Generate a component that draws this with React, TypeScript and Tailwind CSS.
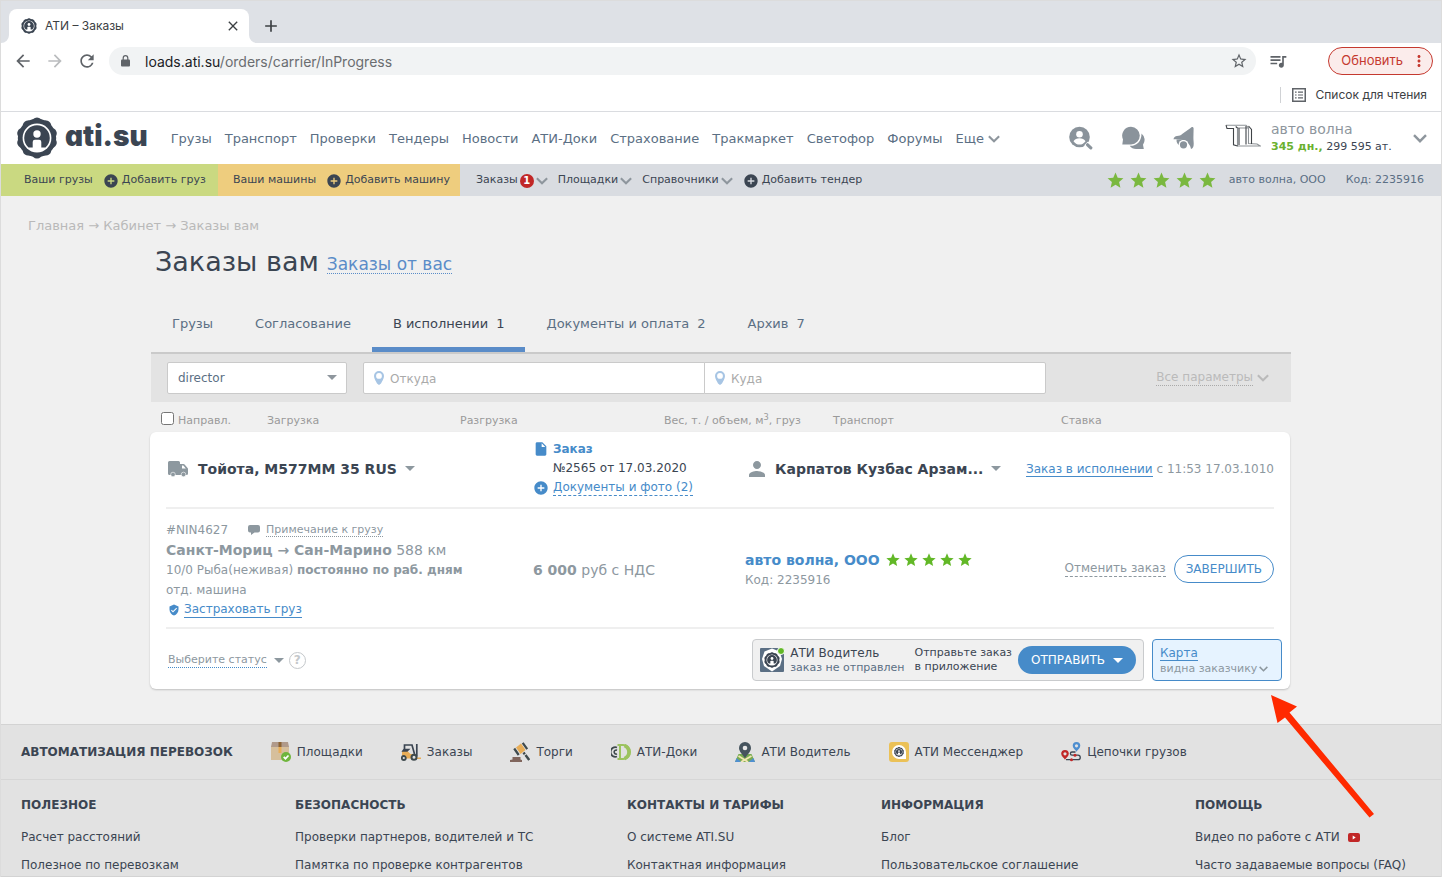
import React from 'react';
import {
  MdAddCircle,
  MdArrowBack,
  MdArrowForward,
  MdClose,
  MdAdd,
  MdInsertDriveFile,
  MdMoreVert,
  MdPerson,
  MdQueueMusic,
  MdRefresh,
  MdStar,
  MdStarBorder,
  MdVerifiedUser,
} from 'react-icons/md';

const mainNav = ['Грузы', 'Транспорт', 'Проверки', 'Тендеры', 'Новости', 'АТИ-Доки', 'Страхование', 'Тракмаркет', 'Светофор', 'Форумы'];

const tabs = [
  { name: 'Грузы' },
  { name: 'Согласование' },
  { name: 'В исполнении', count: 1, active: true },
  { name: 'Документы и оплата', count: 2 },
  { name: 'Архив', count: 7 },
];

const footerColumns = [
  { title: 'ПОЛЕЗНОЕ', links: ['Расчет расстояний', 'Полезное по перевозкам'] },
  { title: 'БЕЗОПАСНОСТЬ', links: ['Проверки партнеров, водителей и ТС', 'Памятка по проверке контрагентов'] },
  { title: 'КОНТАКТЫ И ТАРИФЫ', links: ['О системе ATI.SU', 'Контактная информация'] },
  { title: 'ИНФОРМАЦИЯ', links: ['Блог', 'Пользовательское соглашение'] },
  { title: 'ПОМОЩЬ', links: ['Видео по работе с АТИ', 'Часто задаваемые вопросы (FAQ)'], video: true },
];

function GearLogo({ className }: { className?: string }) {
  return (
    <svg viewBox="0 0 42 42" className={className} fill="currentColor" aria-hidden="true">
      <circle cx="21" cy="21" r="19.2" />
      {[0, 36, 72, 108, 144, 180, 216, 252, 288, 324].map((a) => (
        <circle key={a} cx="21" cy="5.8" r="5.3" transform={`rotate(${a} 21 21)`} />
      ))}
      <circle cx="21" cy="21" r="14.4" fill="white" />
      <path d="M21 8.200a12.800 12.800 0 0 1 12.800 12.800c0 4-1.600 7-4.300 9.500h-17c-2.700-2.500-4.300-5.500-4.300-9.500A12.800 12.800 0 0 1 21 8.200z" />
      <circle cx="21" cy="17" r="3.700" fill="white" />
      <path d="M16.700 31.500v-6.500a2.200 2.200 0 0 1 2.200-2.200h4.200a2.200 2.200 0 0 1 2.200 2.200v6.500z" fill="white" />
    </svg>
  );
}

function Caret({ className = '' }: { className?: string }) {
  return (
    <svg viewBox="0 0 10 5" className={`w-[10px] h-[5px] shrink-0 ${className}`} fill="currentColor" aria-hidden="true">
      <path d="M0 0h10L5 5z" />
    </svg>
  );
}

function Chevron({ className = '' }: { className?: string }) {
  return (
    <svg viewBox="0 0 14 9" className={`shrink-0 ${className}`} fill="none" stroke="currentColor" strokeWidth="2.4" aria-hidden="true">
      <path d="M1 1.200l6 6 6-6" />
    </svg>
  );
}

function PinIcon() {
  return (
    <svg viewBox="0 0 10 14" className="w-2.5 h-3.5 shrink-0" aria-hidden="true">
      <path fillRule="evenodd" d="M5 0a5 5 0 0 1 5 5c0 3-2 5-3 7.500L5 14l-2-1.500C2 10 0 8 0 5a5 5 0 0 1 5-5zm0 2a2.900 2.900 0 1 0 0 5.800A2.900 2.900 0 0 0 5 2z" fill="#a7c5e4" />
    </svg>
  );
}

function TruckIcon() {
  return (
    <svg viewBox="0 0 20 16" className="w-5 h-4 shrink-0" aria-hidden="true">
      <path d="M1.500 0h9A1.500 1.500 0 0 1 12 1.500V3h3.500c.5 0 1 .3 1.300.7L19.600 7c.3.400.4.8.4 1.200v4.300c0 .8-.5 1.500-1.500 1.500h-17C.5 14 0 13.300 0 12.500v-11A1.500 1.500 0 0 1 1.500 0z" fill="#8d989f" />
      <path d="M14 4.500h1.300l2.500 3H14z" fill="white" />
      <circle cx="5" cy="13.500" r="2.300" fill="#8d989f" stroke="white" strokeWidth=".6" />
      <circle cx="15.500" cy="13.500" r="2.300" fill="#8d989f" stroke="white" strokeWidth=".6" />
    </svg>
  );
}

function BrowserBar() {
  return (
    <div className="text-[#3c4043] [font-family:Inter,sans-serif]">
      <div className="flex h-[43px] items-end bg-[#dee1e6] border-t border-[#dcdcdc] pl-2">
        <div className="relative flex h-[34px] w-60 items-center rounded-t-lg bg-white pl-3 pr-2">
          <svg viewBox="0 0 8 8" className="absolute -left-2 bottom-0 w-2 h-2 fill-white" aria-hidden="true"><path d="M8 0v8H0a8 8 0 0 0 8-8z" /></svg>
          <svg viewBox="0 0 8 8" className="absolute -right-2 bottom-0 w-2 h-2 fill-white" aria-hidden="true"><path d="M0 0v8h8a8 8 0 0 1-8-8z" /></svg>
          <GearLogo className="w-4 h-4 text-[#3b4552]" />
          <span className="ml-2 flex-1 text-xs">АТИ – Заказы</span>
          <button type="button" aria-label="Закрыть вкладку"><MdClose className="w-4 h-4" /></button>
        </div>
        <button type="button" aria-label="Новая вкладка" className="ml-3 mb-[7px]"><MdAdd className="w-5 h-5" /></button>
      </div>

      <div className="flex h-9 items-center bg-white pl-3 pr-2">
        <button type="button" aria-label="Назад"><MdArrowBack className="w-5 h-5 text-[#5f6368]" /></button>
        <button type="button" aria-label="Вперёд" className="ml-3"><MdArrowForward className="w-5 h-5 text-[#babcbe]" /></button>
        <button type="button" aria-label="Обновить страницу" className="ml-3"><MdRefresh className="w-5 h-5 text-[#5f6368]" /></button>
        <div className="ml-3 flex h-7 flex-1 items-center rounded-full bg-[#f1f3f4] pl-3 pr-2">
          <svg viewBox="0 0 9 12" className="w-[9px] h-3" aria-hidden="true">
            <path d="M2.200 5V3a2.300 2.300 0 0 1 4.600 0v2" fill="none" stroke="#5f6368" strokeWidth="1.200" />
            <rect y="4.500" width="9" height="7" rx="1" fill="#5f6368" />
          </svg>
          <span className="ml-[15px] flex-1 pt-px text-sm text-[#6a6d70]"><span className="text-[#202124]">loads.ati.su</span>/orders/carrier/InProgress</span>
          <button type="button" aria-label="Добавить в закладки"><MdStarBorder className="w-[18px] h-[18px] text-[#5f6368]" /></button>
        </div>
        <MdQueueMusic className="ml-3 w-5 h-5 text-[#5f6368]" />
        <button type="button" className="ml-10 flex h-7 items-center rounded-full border border-[#c5392f] bg-[#fbeceb] pl-3 pr-1 text-[13px] text-[#c5392f]">
          Обновить
          <MdMoreVert className="ml-[7px] w-[18px] h-[18px]" />
        </button>
      </div>

      <div className="flex h-[33px] items-center justify-end border-b border-[#dadce0] bg-white pr-3.5">
        <span className="h-4 w-px bg-[#d0d2d5]"></span>
        <svg viewBox="0 0 14 14" className="ml-[11px] w-3.5 h-3.5" fill="none" stroke="#5f6368" aria-hidden="true">
          <path d="M.75.75h12.500v12.500H.75z" strokeWidth="1.500" />
          <path d="M3 4.200h1.600M3 7h1.600M3 9.800h1.600M6 4.200h5M6 7h5M6 9.800h5" strokeWidth="1.200" />
        </svg>
        <span className="ml-2.5 text-xs">Список для чтения</span>
      </div>
    </div>
  );
}

function Header() {
  return (
    <header className="flex h-[52px] items-center bg-white pl-[15px] pr-3.5">
      <a href="#" className="flex items-center text-[#3b4552]">
        <GearLogo className="w-[42px] h-[42px]" />
        <span className="ml-[7px] mb-1 text-[28px] leading-8 font-black [font-family:Inter,sans-serif] [font-feature-settings:'cv11']">ati.su</span>
      </a>
      <nav className="ml-[23px] flex items-center gap-[13px] pt-px text-[13px] text-[#5b6f84]">
        {mainNav.map((item) => (
          <a key={item} href="#">{item}</a>
        ))}
        <button type="button" className="flex items-center gap-1">
          Еще <Chevron className="w-3 h-2 text-[#8e969d]" />
        </button>
      </nav>
      <div className="ml-auto flex items-center text-[#8a939b]">
        <a href="#" aria-label="Поиск фирм">
          <svg viewBox="0 0 24 24" className="w-6 h-6" fill="currentColor" aria-hidden="true">
            <circle cx="10.500" cy="11" r="10.300" />
            <circle cx="10.500" cy="8.200" r="3.300" fill="white" />
            <path d="M4.500 15.300c1-2 3.500-3 6-3s5 1 6 3a7.200 7.200 0 0 1-12 0z" fill="white" />
            <path d="M17 17.500l6 6" stroke="white" strokeWidth="5" />
            <path d="M18.600 18.800l3.200 3" stroke="currentColor" strokeWidth="3.200" strokeLinecap="round" />
          </svg>
        </a>
        <a href="#" aria-label="Сообщения" className="ml-7">
          <svg viewBox="0 0 24 24" className="w-6 h-6" fill="currentColor" aria-hidden="true">
            <path d="M20.500 7.500a8.300 8.300 0 0 1 1.500 11.300l.8 4.200h-7.300a8 8 0 0 1-6.800-3.200c6.500.6 12-4.600 11.800-12.300z" />
            <path d="M10 .8a8.800 8.800 0 1 1 0 17.600H1.300l.7-5A8.800 8.800 0 0 1 10 .8z" />
          </svg>
        </a>
        <a href="#" aria-label="Уведомления" className="ml-7">
          <svg viewBox="0 0 24 24" className="w-6 h-6" fill="currentColor" aria-hidden="true">
            <path d="M17.600 2c.9-1.400 3-1.300 3 .6l-.2 9.400c0 3 .6 5 .2 7.500-.3 1.700-1 3-2.600 3.500-.4-4-4-8-8-9-3-.8-6-.5-9.500-.8.2-2 1.800-3 3.500-3.200 2.200-.3 4-.5 5.500-2.200z" />
            <path d="M3.500 13.500c-.3 3 1.500 5.500 4 6.500l2-6.500z" />
            <circle cx="10.500" cy="18.800" r="4.900" fill="white" />
            <circle cx="10.500" cy="18.800" r="3.600" />
          </svg>
        </a>
        <svg viewBox="0 0 36 24" className="ml-7 w-9 h-6 mb-1" fill="none" strokeWidth="1.100" aria-hidden="true">
          <path d="M1 1.200h20l2.500 2.500v15.800l8.500.5 3.500 2H12.500V4H23" stroke="#8d9296" />
          <path d="M1 1.200l1 3.300h6.500v16.300l4 1.200M12.500 4l-1.800-1.500M14 4v17M21 2v18.500M26.500 20V5.500L23.500 2" stroke="#3f4347" />
        </svg>
        <div className="ml-2.5 w-[142px]">
          <div className="text-sm leading-[18px] text-[#8e969d]">авто волна</div>
          <div className="text-[11px] leading-[18px] text-[#3b4552]"><b className="text-[#6bb12f]">345 дн.,</b> 299 595 ат.</div>
        </div>
        <button type="button" aria-label="Меню профиля"><Chevron className="w-3.5 h-[9px] text-[#8e969d]" /></button>
      </div>
    </header>
  );
}

function SubNav() {
  return (
    <div className="flex h-8 items-center bg-[#d9dce1] text-[11px] text-[#3b4552]">
      <div className="flex h-full w-[217px] items-center gap-2.5 bg-[#cad981] pl-[23px] pt-px">
        <a href="#">Ваши грузы</a>
        <a href="#" className="flex items-center gap-[3px]"><MdAddCircle className="w-4 h-4" />Добавить груз</a>
      </div>
      <div className="flex h-full w-[242px] items-center gap-2.5 bg-[#eecd7e] pl-[15px] pt-px">
        <a href="#">Ваши машины</a>
        <a href="#" className="flex items-center gap-[3px]"><MdAddCircle className="w-4 h-4" />Добавить машину</a>
      </div>
      <div className="flex items-center gap-2.5 pl-4 pt-px">
        <button type="button" className="flex items-center gap-0.5">
          Заказы
          <span className="flex h-3.5 w-3.5 items-center justify-center rounded-full bg-[#c12727] text-[10px] font-bold text-white">1</span>
          <Chevron className="w-3 h-2 text-[#8e969d]" />
        </button>
        <button type="button" className="flex items-center gap-0.5">Площадки <Chevron className="w-3 h-2 text-[#8e969d]" /></button>
        <button type="button" className="flex items-center gap-0.5">Справочники <Chevron className="w-3 h-2 text-[#8e969d]" /></button>
        <a href="#" className="flex items-center gap-[3px]"><MdAddCircle className="w-4 h-4" />Добавить тендер</a>
      </div>
      <div className="ml-auto flex items-center pr-[17px] pt-px text-[#5b6f84]">
        <span className="flex gap-1 text-[#7ab83f]">
          {[1, 2, 3, 4, 5].map((n) => <MdStar key={n} className="w-[19px] h-[19px]" />)}
        </span>
        <a href="#" className="ml-3">авто волна, ООО</a>
        <span className="ml-5">Код: 2235916</span>
      </div>
    </div>
  );
}

function Filters() {
  return (
    <form className="flex h-[50px] items-center border-t-2 border-[#cacaca] bg-[#e3e3e3] px-4 text-xs">
      <div className="relative w-[180px]">
        <select aria-label="Сотрудник" className="h-8 w-full appearance-none rounded-xs border border-[#cacaca] bg-white pl-2.5 text-[#5b6f84]">
          <option>director</option>
        </select>
        <Caret className="absolute right-2.5 top-[13px] text-[#8e969d]" />
      </div>
      <label className="ml-4 flex h-8 w-[342px] items-center rounded-l-xs border border-[#cacaca] bg-white pl-2.5">
        <PinIcon />
        <input type="text" aria-label="Откуда" placeholder="Откуда" className="ml-1.5 w-full pt-0.5 outline-none placeholder:text-[#aaaaaa]" />
      </label>
      <label className="-ml-px flex h-8 w-[342px] items-center rounded-r-xs border border-[#cacaca] bg-white pl-2.5">
        <PinIcon />
        <input type="text" aria-label="Куда" placeholder="Куда" className="ml-1.5 w-full pt-0.5 outline-none placeholder:text-[#aaaaaa]" />
      </label>
      <button type="button" className="ml-auto mr-1.5 flex items-center gap-1 text-[#bababa]">
        <span className="border-b border-dotted border-[#aaaaaa] leading-[15px]">Все параметры</span>
        <Chevron className="w-3 h-2" />
      </button>
    </form>
  );
}

function OrderCard() {
  return (
    <div className="relative -ml-px mr-px rounded-md bg-white text-xs text-[#8d989f] shadow-[0_1px_2px_rgba(0,0,0,0.2)]">
      {/* Машина, заказ, водитель */}
      <div className="mx-4 grid h-[77px] grid-cols-[367fr_212fr_529fr] items-center border-b-2 border-[#efefef]">
        <button type="button" className="mb-0.5 flex items-center text-sm font-bold text-[#3b4552]">
          <span className="ml-0.5"><TruckIcon /></span>
          <span className="ml-2.5">Тойота, М577ММ 35 RUS</span>
          <Caret className="ml-2 text-[#8d989f]" />
        </button>
        <div className="mb-1 leading-[19px]">
          <a href="#" className="flex items-center gap-1 font-bold text-[#468bc9]"><MdInsertDriveFile className="w-4 h-4" />Заказ</a>
          <div className="pl-5 text-[#3b4552]">№2565 от 17.03.2020</div>
          <a href="#" className="flex items-center gap-1 pt-0.5 text-[#468bc9]">
            <MdAddCircle className="w-4 h-4" />
            <span className="border-b border-dashed border-[#468bc9] leading-[15px]">Документы и фото (2)</span>
          </a>
        </div>
        <div className="mb-0.5 flex items-center justify-between">
          <button type="button" className="flex items-center text-sm font-bold text-[#3b4552]">
            <MdPerson className="w-6 h-6 text-[#8d989f]" />
            <span className="ml-1.5">Карпатов Кузбас Арзам...</span>
            <Caret className="ml-2 text-[#8d989f]" />
          </button>
          <span><a href="#" className="border-b border-[#468bc9] text-[#468bc9]">Заказ в исполнении</a> с 11:53 17.03.1010</span>
        </div>
      </div>

      {/* Груз, ставка, заказчик */}
      <div className="mx-4 grid h-[120px] grid-cols-[367fr_212fr_529fr] items-center border-b-2 border-[#efefef] pt-0.5">
        <div className="leading-5">
          <div className="flex items-center">
            #NIN4627
            <svg viewBox="0 0 12 10" className="ml-5 w-3 h-2.5" fill="currentColor" aria-hidden="true">
              <path d="M2 0h8a2 2 0 0 1 2 2v3.500a2 2 0 0 1-2 2H6.500L3 10V7.500H2a2 2 0 0 1-2-2V2a2 2 0 0 1 2-2z" />
            </svg>
            <a href="#" className="ml-1.5 border-b border-dotted border-[#8d989f] text-[11px] leading-[13px]">Примечание к грузу</a>
          </div>
          <div className="text-sm leading-5"><b>Санкт-Мориц → Сан-Марино</b> 588 км</div>
          <div>10/0 Рыба(неживая) <b>постоянно по раб. дням</b></div>
          <div>отд. машина</div>
          <a href="#" className="flex items-center gap-1 pl-0.5 pt-0.5 text-[#468bc9]">
            <MdVerifiedUser className="w-3 h-3" />
            <span className="border-b border-[#468bc9] leading-[15px]">Застраховать груз</span>
          </a>
        </div>
        <div className="pt-0.5 text-sm"><b>6 000</b> руб с НДС</div>
        <div className="flex items-center justify-between">
          <div className="pt-0.5 leading-5">
            <div className="flex items-center">
              <a href="#" className="text-sm font-bold text-[#468bc9]">авто волна, ООО</a>
              <span className="ml-[5px] flex gap-0.5 text-[#62b827]">
                {[1, 2, 3, 4, 5].map((n) => <MdStar key={n} className="w-4 h-4" />)}
              </span>
            </div>
            <div>Код: 2235916</div>
          </div>
          <div className="flex items-center gap-2">
            <button type="button" className="border-b border-dashed border-[#8d989f] leading-[15px]">Отменить заказ</button>
            <button type="button" className="h-7 rounded-full border border-[#468bc9] px-[11px] text-[#468bc9]">ЗАВЕРШИТЬ</button>
          </div>
        </div>
      </div>

      {/* Статус и отправка водителю */}
      <div className="flex h-[60px] items-center pl-[18px] pr-2 pt-0.5">
        <button type="button" className="flex items-center text-[11px]">
          <span className="border-b border-dotted border-[#468bc9] leading-[15px]">Выберите статус</span>
          <Caret className="ml-[7px]" />
        </button>
        <button type="button" aria-label="Подсказка" className="ml-[5px] flex h-[17px] w-[17px] items-center justify-center rounded-full border border-[#c4c8cb] font-bold text-[#c4c8cb]">?</button>
        <div className="ml-auto flex h-[42px] items-center rounded-[4px] border border-[#c9cbcd] bg-[#f0f0f0] px-[7px] text-[11px] leading-3.5">
          <span className="relative text-[#3b4552]">
            <svg viewBox="0 0 24 24" className="w-6 h-6" aria-hidden="true">
              <rect width="24" height="24" rx="1" fill="#5b6f84" />
              <path d="M12 .5l7.500 3 2.500 7.500-2 7-8 5.500L4 18 2 11l2.500-7.500z" fill="white" />
            </svg>
            <GearLogo className="absolute left-1 top-1 w-4 h-4" />
            <span className="absolute -right-px -top-px h-[6px] w-[6px] rounded-full border border-white bg-[#62b827] box-content"></span>
          </span>
          <div className="ml-1.5">
            <div className="text-xs leading-4 text-[#3b4552]">АТИ Водитель</div>
            <div className="text-[#5b6f84]">заказ не отправлен</div>
          </div>
          <div className="ml-2.5 text-[#3b4552]">Отправьте заказ<br />в приложение</div>
          <button type="button" className="ml-1.5 flex h-7 items-center gap-2 rounded-full bg-[#468bc9] px-[13px] text-xs text-white">ОТПРАВИТЬ <Caret /></button>
        </div>
        <div className="ml-2 h-[42px] w-[130px] rounded-[4px] border border-[#468bc9] bg-[#e6f3ff] pl-[7px] pt-1.5 text-[11px]">
          <a href="#" className="inline-block border-b border-[#468bc9] text-xs leading-3.5 text-[#468bc9]">Карта</a>
          <button type="button" className="flex items-center gap-0.5 leading-3.5">видна заказчику <Chevron className="w-[9px] h-1.5" /></button>
        </div>
      </div>

      {/* Указатель на карту */}
      <svg viewBox="0 0 104 124" className="absolute -right-[85px] top-[263px] z-10 w-[104px] h-[124px]" fill="#ff2a00" aria-hidden="true">
        <path d="M0 0l26 11.500-7.500 6L103 119l-4.500 3.500L14 22.500 6.500 28z" />
      </svg>
    </div>
  );
}

function BoxIcon() {
  return (
    <svg viewBox="0 0 20 20" className="w-5 h-5" aria-hidden="true">
      <path d="M0 4h18v14H0z" fill="#d6bf9c" />
      <path d="M1 0h16l1 5H0z" fill="#b09a8b" />
      <path d="M7.500 0h3v5h-3z" fill="#8d6434" />
      <path d="M7.500 5h3v6h-3z" fill="#e8ad57" />
      <circle cx="15" cy="15" r="5" fill="#6fb53c" />
      <path d="M12.700 14.800l1.800 1.900 3-3.200" fill="none" stroke="white" strokeWidth="1.700" />
    </svg>
  );
}

function ForkliftIcon() {
  return (
    <svg viewBox="0 0 20 20" className="w-5 h-5" aria-hidden="true">
      <path d="M1 9h5.500l3 3H13v4.500H1z" fill="#e8ad57" />
      <path d="M14 15.500h6v1.500h-6z" fill="#e8ad57" />
      <path d="M3.500 9.500V3H11l2.500 9M3 7.500h4.500L6 9H2z" fill="none" stroke="#3b4552" strokeWidth="1.700" />
      <path d="M15.800 2v12.500" stroke="#3b4552" strokeWidth="1.700" />
      <circle cx="2.800" cy="16" r="2" fill="#e2e2e2" stroke="#3f4a4d" strokeWidth="1.800" />
      <circle cx="13" cy="15.300" r="2.500" fill="#e2e2e2" stroke="#3f4a4d" strokeWidth="2" />
    </svg>
  );
}

function GavelIcon() {
  return (
    <svg viewBox="0 0 20 20" className="w-5 h-5" aria-hidden="true">
      <path d="M2.500 15h8v2.500l1.500.5v2H0v-2l2.500-.5z" fill="#80655c" />
      <path d="M6 5.500l5-4L15.500 8l-5 4z" fill="#e8ad57" />
      <path d="M4.200 6.500l4.500 6.500M12.700.8l4.500 6.400" stroke="#3f4a4d" strokeWidth="2.200" />
      <path d="M13.500 10.500l1.300 1.800M15.500 13l3.700 5" stroke="#3f4a4d" strokeWidth="2.400" />
    </svg>
  );
}

function DocsIcon() {
  return (
    <svg viewBox="0 0 20 20" className="w-5 h-5" fill="none" aria-hidden="true">
      <path d="M6 5.500a4.800 4.800 0 1 0 0 9" stroke="#3f4a4d" strokeWidth="1.800" />
      <path d="M6 8.300a2 2 0 1 0 0 3.600" stroke="#3f4a4d" strokeWidth="1.600" />
      <path d="M6.500 3h5.500a7 7 0 0 1 0 14H6.500M9 3v14" stroke="#9cc35f" strokeWidth="2" />
      <path d="M13.500 3.500a7 7 0 0 1 0 13" stroke="#9cc35f" strokeWidth="3.500" />
    </svg>
  );
}

function MapIcon() {
  return (
    <svg viewBox="0 0 20 20" className="w-5 h-5" aria-hidden="true">
      <path d="M3.500 12h13L20 20H0z" fill="#78ab51" />
      <path d="M1.500 16l5 4H0zM18.500 16l-5 4H20z" fill="#4f8fd0" />
      <path d="M3.500 14l9.500 6M16.500 14L6 20" stroke="#f3e6b3" strokeWidth="1.800" />
      <path d="M10 0a6 6 0 0 1 6 6c0 4-4.500 7-6 10.500C8.500 13 4 10 4 6a6 6 0 0 1 6-6z" fill="#46545e" />
      <circle cx="10" cy="6" r="2.300" fill="#e8e8e8" />
    </svg>
  );
}

function MessengerIcon() {
  return (
    <span className="flex h-5 w-5 items-center justify-center rounded-[3px] bg-[#ebc157] text-[#3b4552]">
      <span className="flex h-3.5 w-3.5 items-center justify-center rounded-full rounded-br-none bg-white">
        <GearLogo className="w-2.5 h-2.5" />
      </span>
    </span>
  );
}

function RouteIcon() {
  return (
    <svg viewBox="0 0 20 20" className="w-5 h-5" fill="none" aria-hidden="true">
      <path d="M14.500 10h-3.500a1.600 1.600 0 0 0 0 3.200h6a2.200 2.200 0 0 1 0 4.500H5" stroke="#3b4552" strokeWidth="1.300" />
      <path d="M15.500 0a3.800 3.800 0 0 1 3.800 3.800c0 2.500-2.800 4-3.800 6-1-2-3.800-3.500-3.800-6A3.800 3.800 0 0 1 15.500 0z" fill="#4f8fd0" />
      <circle cx="15.500" cy="3.800" r="1.600" fill="#e2e2e2" />
      <path d="M4 8a3.800 3.800 0 0 1 3.800 3.800c0 2.500-2.800 4-3.800 6-1-2-3.800-3.500-3.800-6A3.800 3.800 0 0 1 4 8z" fill="#c12727" />
      <circle cx="4" cy="11.800" r="1.600" fill="#e2e2e2" />
      <circle cx="14" cy="13.200" r="1.500" fill="#c12727" />
      <circle cx="10.500" cy="17.700" r="1.500" fill="#c12727" />
    </svg>
  );
}

const services = [
  { name: 'Площадки', icon: <BoxIcon /> },
  { name: 'Заказы', icon: <ForkliftIcon /> },
  { name: 'Торги', icon: <GavelIcon /> },
  { name: 'АТИ-Доки', icon: <DocsIcon /> },
  { name: 'АТИ Водитель', icon: <MapIcon /> },
  { name: 'АТИ Мессенджер', icon: <MessengerIcon /> },
  { name: 'Цепочки грузов', icon: <RouteIcon /> },
];

function Footer() {
  return (
    <footer className="border-y border-[#d3d3d3] bg-[#e2e2e2] text-xs text-[#3b4552]">
      <div className="flex h-[55px] items-center gap-[38px] border-b border-[#d6d6d6] px-5">
        <h3 className="font-bold">АВТОМАТИЗАЦИЯ ПЕРЕВОЗОК</h3>
        {services.map((service) => (
          <a key={service.name} href="#" className="flex items-center gap-1.5">
            {service.icon}
            {service.name}
          </a>
        ))}
      </div>
      <div className="grid grid-cols-[274fr_332fr_254fr_314fr_226fr] px-5 pt-[17px] pb-[3px]">
        {footerColumns.map((col) => (
          <div key={col.title} className="whitespace-nowrap">
            <h3 className="mb-2.5 leading-4 font-bold">{col.title}</h3>
            <ul>
              {col.links.map((link, i) => (
                <li key={link} className="mb-3 leading-4 first:pt-1.5 last:mb-0">
                  <a href="#" className="inline-flex items-center gap-2">
                    {link}
                    {col.video && i === 0 && (
                      <svg viewBox="0 0 12 9" className="w-3 h-[9px]" aria-hidden="true">
                        <rect width="12" height="9" rx="2" fill="#c12727" />
                        <path d="M4.700 2.500v4l3-2z" fill="white" />
                      </svg>
                    )}
                  </a>
                </li>
              ))}
            </ul>
          </div>
        ))}
      </div>
    </footer>
  );
}

export default function App() {
  return (
    <div className="min-h-screen border-x border-[#dcdcdc] bg-[#f0f0f0] [font-family:'DejaVu_Sans',Verdana,sans-serif]">
      <BrowserBar />
      <Header />
      <SubNav />

      <nav className="pl-[27px] pt-[21px] text-[13px] leading-[18px] text-[#b9b9b9]">
        <a href="#">Главная</a> → <a href="#">Кабинет</a> → <a href="#">Заказы вам</a>
      </nav>

      <main className="mx-auto max-w-[1140px] pb-[35px]">
        <div className="flex items-center pl-1 pt-[7px]">
          <h1 className="text-[27px] leading-10 text-[#3b4552]">Заказы вам</h1>
          <a href="#" className="ml-2 mt-1 border-b border-dotted border-[#5a8cc8] text-[17px] leading-[18px] text-[#5a8cc8]">Заказы от вас</a>
        </div>

        <nav className="mt-3.5 flex h-[56px] text-[13px] leading-5 text-[#5b6f84]">
          {tabs.map((tab) => (
            <a
              key={tab.name}
              href="#"
              className={
                tab.active
                  ? 'flex gap-2 px-[21px] pt-[18px] border-b-[5px] border-[#5a8cc8] text-[#3b4552]'
                  : 'flex gap-2 px-[21px] pt-[18px]'
              }
            >
              <span>{tab.name}</span>
              {tab.count && <span>{tab.count}</span>}
            </a>
          ))}
        </nav>

        <Filters />

        <div className="grid h-[30px] grid-cols-[106fr_193fr_204fr_169fr_228fr_230fr] items-center pl-2.5 pt-2 text-[11px] text-[#9a9a9a]">
          <label className="flex items-center gap-1">
            <input type="checkbox" className="h-[13px] w-[13px] mb-1.5" />
            Направл.
          </label>
          <span>Загрузка</span>
          <span>Разгрузка</span>
          <span>Вес, т. / объем, м<sup>3</sup>, груз</span>
          <span>Транспорт</span>
          <span>Ставка</span>
        </div>

        <OrderCard />
      </main>

      <Footer />
    </div>
  );
}
